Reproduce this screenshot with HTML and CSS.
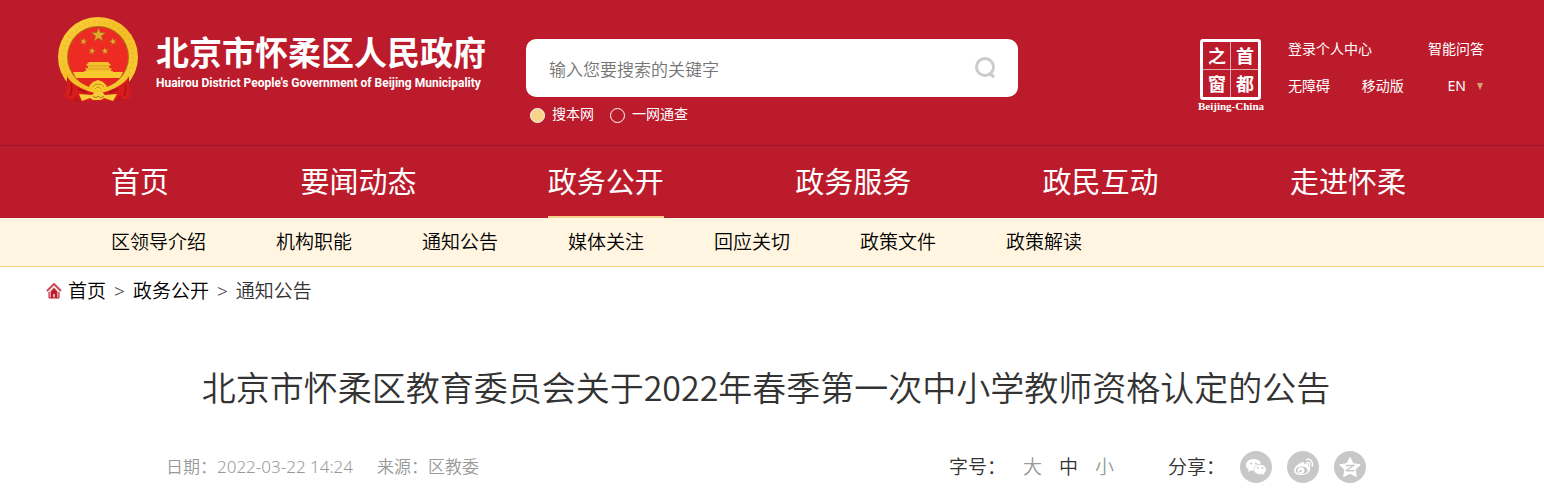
FILE: index.html
```html
<!DOCTYPE html>
<html lang="zh-CN">
<head>
<meta charset="utf-8">
<meta name="viewport" content="width=device-width, initial-scale=1">
<title>北京市怀柔区教育委员会关于2022年春季第一次中小学教师资格认定的公告</title>
<link rel="stylesheet" href="styles.css">
</head>
<body>
<header class="site-header">
  <div class="masthead">
    <a class="brand" href="#">
      <svg class="emblem" viewBox="0 0 82 86" aria-hidden="true">
        <defs>
          <linearGradient id="gold" x1="0" y1="0" x2="1" y2="1">
            <stop offset="0" stop-color="#fbd23c"/><stop offset=".5" stop-color="#f5bd25"/><stop offset="1" stop-color="#f8cf35"/>
          </linearGradient>
          <path id="star" d="M0-1 .235-.324 .951-.309 .38.124 .588.809 0 .4-.588.809-.38.124-.951-.309-.235-.324Z"/>
        </defs>
        <circle cx="41" cy="41" r="40" fill="url(#gold)"/>
        <circle cx="41" cy="41" r="35" fill="none" stroke="#e6a51d" stroke-width="3" stroke-dasharray="2 3" opacity=".3"/>
        <circle cx="41" cy="41" r="31" fill="#a8701a"/>
        <circle cx="41" cy="41" r="30" fill="#ee2b22"/>
        <g fill="#e2aa30" stroke="#a46516" stroke-width=".08">
          <use href="#star" transform="translate(41.500 19) scale(7.500)"/>
          <use href="#star" transform="translate(26.500 25.500) rotate(15) scale(3.700)"/>
          <use href="#star" transform="translate(56 25.500) rotate(-15) scale(3.700)"/>
          <use href="#star" transform="translate(35 35) rotate(10) scale(3.700)"/>
          <use href="#star" transform="translate(48 35) rotate(-10) scale(3.700)"/>
        </g>
        <path d="M32 46h19l3 3-2 1v2h2v3h2v1H27v-1h2v-3h2v-2l-2-1Z" fill="#f7c12c"/>
        <path d="M30 50h23M28 53h27" stroke="#d99a20" stroke-width="1"/>
        <path d="M16 56h50l-3 6H19Z" fill="#fac82f"/>
        <path d="M10 60 24 76h34l14-16v20l-3 5H13l-3-5Z" fill="#bd1519"/>
        <path d="M19 62h44q-9 10-22 10T19 62Z" fill="#e52620"/>
        <path d="M10 60 24 71l8 3 6 1h6l6-1 8-3 14-11-5 12-12 6-12 1h-4l-12-1-12-6Z" fill="#f6c42c"/>
        <path d="M11 62q6 8 20 13l10 3 10-3q14-5 20-13l3 18q-4 5-9 3l-2-4-5 6H24l-5-6-2 4q-5 2-9-3Z" fill="#d81c1b"/>
        <path d="M14 68q2 6-1 12M68 68q2 6-1 12M21 73l9 4M61 73l-9 4" fill="none" stroke="#a51219" stroke-width="1.500"/>
        <path d="m32 70 4-4 5-2 5 2 4 4-4 4H36Z" fill="#f9cc30"/>
        <path d="M35 71q6-6 12 0M38 73q3-4 6 0" fill="none" stroke="#c88719"/>
        <path d="m22 78 13 1 3-3h7l3 3 12-1-4 7-9-3-3 2h-8l-3-2-8 3Z" fill="#f7cd3c"/>
        <path d="M36 80l3 2 2-2 3 2 3-2" fill="none" stroke="#b66d18"/>
      </svg>
      <span class="brand-text">
        <span class="brand-name">北京市怀柔区人民政府</span>
        <span class="brand-en">Huairou District People's Government of Beijing Municipality</span>
      </span>
    </a>
    <form class="search" onsubmit="return false">
      <div class="search-box">
        <input class="search-input" type="text" placeholder="输入您要搜索的关键字" aria-label="搜索关键字">
        <button class="search-button" type="submit" aria-label="搜索">
          <svg width="24" height="24" viewBox="0 0 24 24" fill="none" stroke="#cbcbcb" stroke-width="3"><circle cx="12" cy="11" r="8.500"/><path d="m16 17 5 4"/></svg>
        </button>
      </div>
      <div class="scope">
        <label class="scope-option"><input type="radio" name="scope" checked>搜本网</label>
        <label class="scope-option"><input type="radio" name="scope">一网通查</label>
      </div>
    </form>
    <div class="portal">
      <a class="seal" href="#" aria-label="首都之窗">
        <span class="seal-grid"><span>之</span><span>首</span><span>窗</span><span>都</span></span>
        <span class="seal-en">Beijing-China</span>
      </a>
      <div class="tools">
        <div class="tools-row"><a href="#">登录个人中心</a><a href="#">智能问答</a></div>
        <div class="tools-row"><a href="#">无障碍</a><a href="#">移动版</a><a class="lang" href="#">EN<svg width="8" height="7" viewBox="0 0 8 7" aria-hidden="true"><path d="M1 0h6L4 7Z" fill="#d5a66c"/></svg></a></div>
      </div>
    </div>
  </div>
  <nav class="main-nav">
    <a href="#">首页</a><a href="#">要闻动态</a><a class="active" href="#">政务公开</a><a href="#">政务服务</a><a href="#">政民互动</a><a href="#">走进怀柔</a>
  </nav>
</header>
<nav class="sub-nav">
  <a href="#">区领导介绍</a><a href="#">机构职能</a><a href="#">通知公告</a><a href="#">媒体关注</a><a href="#">回应关切</a><a href="#">政策文件</a><a href="#">政策解读</a>
</nav>
<nav class="crumbs" aria-label="当前位置">
  <svg class="home" width="16" height="17" viewBox="0 0 16 17" aria-hidden="true"><path d="m1 8 7-7 7 7" fill="none" stroke="#c94b58" stroke-width="2"/><path d="M3 9l5-5 5 5v6H3Z" fill="#e9a9af"/><path d="M5 8.500 8 5l3 3.500V15H9v-4H7v4H5Z" fill="#bc1b2c"/><path d="M3 9v6h10V9" fill="none" stroke="#bc1b2c"/></svg>
  <a href="#">首页</a><span>&gt;</span><a href="#">政务公开</a><span>&gt;</span><span>通知公告</span>
</nav>
<main class="article">
  <h1>北京市怀柔区教育委员会关于2022年春季第一次中小学教师资格认定的公告</h1>
  <div class="meta">
    <div class="source"><span>日期：2022-03-22 14:24</span><span>来源：区教委</span></div>
    <div class="font-size"><span>字号：</span><button type="button">大</button><button class="current" type="button">中</button><button type="button">小</button></div>
    <div class="share"><span>分享：</span>
      <a href="#" aria-label="微信"><svg viewBox="0 0 32 32"><circle cx="16" cy="16" r="16" fill="#c8c8c8"/><path d="M13.500 8C9 8 6 10.800 6 14c0 2 1 3.600 2.800 4.700L8 21l3-1.500 3.500.3C14 15.500 17 12.500 21 12.500 20.300 9.700 17.300 8 13.500 8Z" fill="#fff"/><path d="M20 13.500c-3.500 0-6.200 2.200-6.200 5s2.700 5 6.200 5l2-.3 2.700 1.400-.7-2.200c1.500-1 2.300-2.300 2.300-3.900 0-2.800-2.800-5-6.300-5Z" fill="#fff" stroke="#c8c8c8" stroke-width=".6"/><g fill="#c8c8c8"><circle cx="11" cy="12.500" r="1"/><circle cx="16" cy="12.500" r="1"/><circle cx="18" cy="17" r=".9"/><circle cx="22.500" cy="17" r=".9"/></g></svg></a>
      <a href="#" aria-label="微博"><svg viewBox="0 0 32 32"><circle cx="16" cy="16" r="16" fill="#c8c8c8"/><path d="M14.500 11.500c1.500-1 3.200-.7 2.700 1.500 2.300-.8 4.500-.5 3.800 1.800 1.800.6 2.500 1.500 2.300 3-.4 3.700-4.300 6.300-8.800 6.300S7 22.300 7 19.200c0-3 4.500-6.300 7.500-7.700Z" fill="#fff"/><ellipse cx="14.700" cy="19.300" rx="6" ry="3.800" fill="#c8c8c8"/><circle cx="14" cy="19.500" r="3.300" fill="#fff"/><circle cx="13.500" cy="20" r="1.300" fill="#c8c8c8"/><path d="M19.500 8.500c4-.8 7 2.500 5.800 6.500M20 11.500c2-.4 3.200 1 2.600 3" fill="none" stroke="#fff" stroke-width="1.500" stroke-linecap="round"/></svg></a>
      <a href="#" aria-label="QQ空间"><svg viewBox="0 0 32 32"><circle cx="16" cy="16" r="16" fill="#c8c8c8"/><path d="m16 6.500 3.200 6.200 7 1-5.100 4.900 1.300 7L16 22.300l-6.400 3.300 1.300-7-5.100-4.900 7-1Z" fill="#fff" stroke="#fff" stroke-linejoin="round"/><path d="M12 14.500h7.500l-7 5q4 .8 8 0" fill="none" stroke="#c8c8c8" stroke-width="1.400"/></svg></a>
    </div>
  </div>
</main>
</body>
</html>
```
FILE: styles.css
```css
* { box-sizing: border-box; }
body {
  margin: 0;
  background: #fff;
  color: #333;
  font-family: "Noto Sans", "Noto Sans CJK SC", sans-serif;
}
a { color: inherit; text-decoration: none; }
svg { display: block; }
button { border: 0; padding: 0; background: none; font: inherit; color: inherit; cursor: pointer; }

.site-header { background: #bc1b2c; color: #fff; }
.masthead {
  display: flex;
  align-items: flex-start;
  padding: 16px 60px 19px 57px;
}
.brand { display: flex; flex: none; gap: 17px; }
.emblem { width: 82px; height: 86px; }
.brand-text { display: flex; flex-direction: column; padding-top: 15px; white-space: nowrap; }
.brand-name { font-family: "Noto Sans CJK SC", sans-serif; font-size: 33px; font-weight: 700; line-height: 40px; }
.brand-en { font-family: Roboto, sans-serif; font-size: 12px; font-weight: 700; line-height: 25px; }

.search { flex: 0 1 492px; margin: 23px 24px 0 40px; }
.search-box { display: flex; align-items: center; height: 58px; padding: 0 21px 0 23px; border-radius: 10px; background: #fff; }
.search-input { flex: 1; min-width: 0; padding: 0; border: 0; outline: 0; background: none; color: #333; font: 350 17px "Noto Sans CJK SC", sans-serif; }
.search-input::placeholder { color: #757575; opacity: 1; }
.scope { display: flex; gap: 16px; padding: 5px 4px 0; font-size: 14px; line-height: 24px; }
.scope-option { display: flex; align-items: center; gap: 7px; white-space: nowrap; }
.scope-option input { appearance: none; width: 15px; height: 15px; margin: 2px 0 0; border: 1px solid #fff; border-radius: 50%; }
.scope-option input:checked { background: #f6d488; }

.portal { display: flex; flex: none; gap: 24px; margin: 23px 0 0 auto; }
.seal { display: flex; flex-direction: column; align-items: center; }
.seal-grid {
  display: grid;
  grid-template-columns: 1fr 1fr;
  gap: 1px;
  width: 61px;
  height: 61px;
  border: 3px solid #fff;
  border-radius: 3px;
  background: #e7a9b0;
  font: 700 18px/26px "Noto Sans CJK SC", serif;
  text-align: center;
}
.seal-grid span { background: #bc1b2c; }
.seal-en { font: 700 11px/12px "Liberation Serif", serif; }
.tools { width: 196px; font-size: 14px; }
.tools-row { display: flex; justify-content: space-between; line-height: 20px; white-space: nowrap; }
.tools-row + .tools-row { margin-top: 17px; }
.lang { display: flex; align-items: center; gap: 10px; padding-left: 12px; }

.main-nav {
  display: flex;
  justify-content: space-between;
  padding: 0 138px 0 111px;
  border-top: 1px solid #99182a;
  font-size: 29px;
  line-height: 68px;
}
.main-nav a { padding-top: 2px; border-bottom: 2px solid transparent; white-space: nowrap; }
.main-nav .active { border-color: #f9cf89; }
.sub-nav {
  display: flex;
  gap: 70px;
  padding: 0 111px;
  border-bottom: 1px solid #f9cf89;
  background: #fff5e0;
  color: #000;
  font-size: 19px;
  font-weight: 350;
  line-height: 48px;
  white-space: nowrap;
}
.crumbs { display: flex; align-items: center; gap: 8px; padding: 10px 46px; font-size: 19px; font-weight: 350; line-height: 28px; }
.crumbs a { color: #000; }
.home + a { margin-left: -2px; }

.article { padding: 46px 178px 16px 166px; }
h1 { margin: 0; font-family: "Noto Sans CJK SC", sans-serif; font-size: 34px; font-weight: 350; line-height: 52px; text-align: center; }
.meta { display: flex; align-items: center; margin-top: 37px; font-size: 19px; font-weight: 350; line-height: 34px; white-space: nowrap; }
.source { display: flex; gap: 24px; color: #999; font-size: 17px; }
.font-size { display: flex; gap: 17px; margin-left: auto; }
.font-size button { color: #999; }
.font-size .current { color: #333; }
.share { display: flex; align-items: center; gap: 15px; margin-left: 54px; }
.share svg { width: 32px; height: 32px; }
```
